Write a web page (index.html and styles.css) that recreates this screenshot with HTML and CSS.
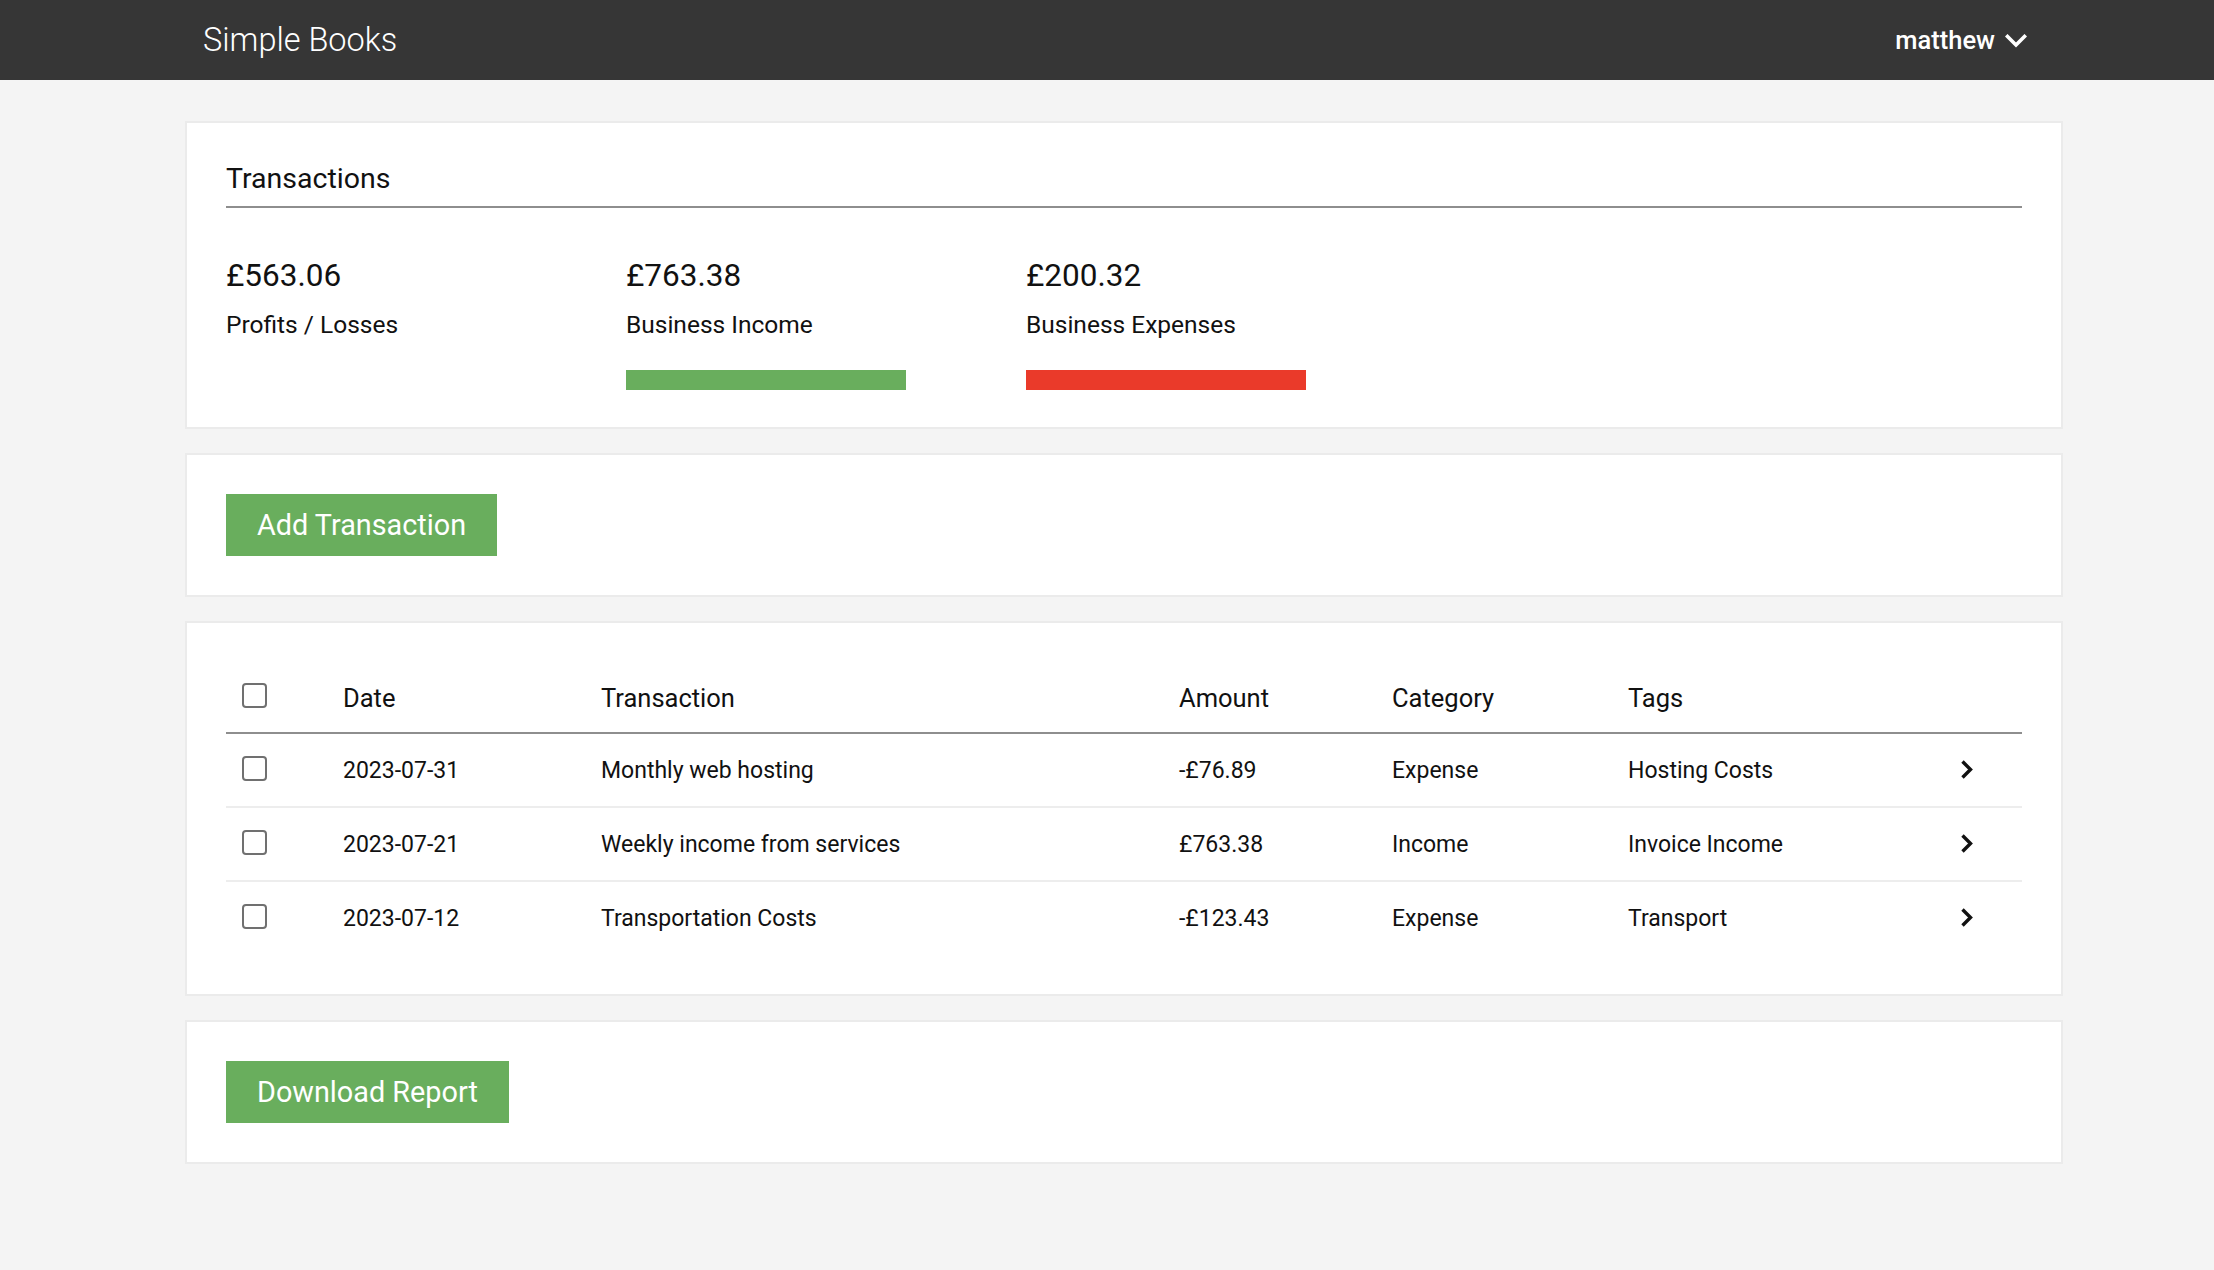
FILE: index.html
```html
<!DOCTYPE html>
<html lang="en">
<head>
<meta charset="utf-8">
<title>Simple Books</title>
<link rel="stylesheet" href="styles.css">
</head>
<body>
<header class="topbar">
  <div class="brand">Simple Books</div>
  <div class="user">
    <span>matthew</span>
    <svg class="user-chevron" width="22" height="14" viewBox="0 0 22 14" aria-hidden="true"><polyline points="2.5,2.5 11,11 19.5,2.5" fill="none" stroke="#fff" stroke-width="3.6" stroke-linecap="square"/></svg>
  </div>
</header>

<main class="page">
  <section class="card summary">
    <h1 class="card-title">Transactions</h1>
    <div class="stats">
      <div class="stat">
        <div class="stat-value">£563.06</div>
        <div class="stat-label">Profits / Losses</div>
      </div>
      <div class="stat">
        <div class="stat-value">£763.38</div>
        <div class="stat-label">Business Income</div>
        <div class="bar bar-income"></div>
      </div>
      <div class="stat">
        <div class="stat-value">£200.32</div>
        <div class="stat-label">Business Expenses</div>
        <div class="bar bar-expense"></div>
      </div>
    </div>
  </section>

  <section class="card action">
    <button class="btn" type="button">Add Transaction</button>
  </section>

  <section class="card list">
    <table class="tx-table">
      <colgroup>
        <col class="c-check"><col class="c-date"><col class="c-desc"><col class="c-amount"><col class="c-cat"><col class="c-tags"><col class="c-go">
      </colgroup>
      <thead>
        <tr>
          <th><input class="check" type="checkbox"></th>
          <th>Date</th>
          <th>Transaction</th>
          <th>Amount</th>
          <th>Category</th>
          <th>Tags</th>
          <th></th>
        </tr>
      </thead>
      <tbody>
        <tr>
          <td><input class="check" type="checkbox"></td>
          <td>2023-07-31</td>
          <td>Monthly web hosting</td>
          <td>-£76.89</td>
          <td>Expense</td>
          <td>Hosting Costs</td>
          <td class="go"><svg width="14" height="22" viewBox="0 0 14 22" aria-hidden="true"><polyline points="2.5,2.5 10.5,10.5 2.5,18.5" fill="none" stroke="#111" stroke-width="3.4"/></svg></td>
        </tr>
        <tr>
          <td><input class="check" type="checkbox"></td>
          <td>2023-07-21</td>
          <td>Weekly income from services</td>
          <td>£763.38</td>
          <td>Income</td>
          <td>Invoice Income</td>
          <td class="go"><svg width="14" height="22" viewBox="0 0 14 22" aria-hidden="true"><polyline points="2.5,2.5 10.5,10.5 2.5,18.5" fill="none" stroke="#111" stroke-width="3.4"/></svg></td>
        </tr>
        <tr>
          <td><input class="check" type="checkbox"></td>
          <td>2023-07-12</td>
          <td>Transportation Costs</td>
          <td>-£123.43</td>
          <td>Expense</td>
          <td>Transport</td>
          <td class="go"><svg width="14" height="22" viewBox="0 0 14 22" aria-hidden="true"><polyline points="2.5,2.5 10.5,10.5 2.5,18.5" fill="none" stroke="#111" stroke-width="3.4"/></svg></td>
        </tr>
      </tbody>
    </table>
  </section>

  <section class="card action">
    <button class="btn" type="button">Download Report</button>
  </section>
</main>
</body>
</html>
```

FILE: styles.css
```css
* { box-sizing: border-box; }

html, body {
  margin: 0;
  padding: 0;
}

body {
  background: #f4f4f4;
  color: #111;
  font-family: Roboto, "Liberation Sans", Arial, sans-serif;
  min-height: 1270px;
}

.topbar {
  height: 80px;
  background: #363636;
  color: #fff;
  display: flex;
  align-items: center;
  justify-content: space-between;
  padding: 0 187px 0 203px;
}

.brand {
  font-size: 32.5px;
  font-weight: 300;
}

.user {
  display: flex;
  align-items: center;
  gap: 10px;
  font-size: 25.5px;
  font-weight: 500;
}

.user-chevron {
  display: block;
  margin-top: 2px;
}

.page {
  display: flex;
  flex-direction: column;
  gap: 24px;
  padding: 41px 151px 40px 185px;
}

.card {
  background: #fff;
  border: 2px solid #ebebeb;
  padding: 39px;
}

.summary {
  padding-bottom: 37px;
}

.card-title {
  margin: 0;
  font-size: 28.5px;
  font-weight: 400;
  line-height: 34px;
  padding-bottom: 10px;
  border-bottom: 2px solid #8e8e8e;
}

.stats {
  display: grid;
  grid-template-columns: 400px 400px 400px;
  margin-top: 49px;
}

.stat-value {
  font-size: 31.5px;
  line-height: 38px;
}

.stat-label {
  font-size: 24.5px;
  line-height: 30px;
  margin-top: 15px;
}

.bar {
  width: 280px;
  height: 20px;
  margin-top: 30px;
}

.bar-income { background: #69ae5d; }
.bar-expense { background: #ea3a2a; }

.btn {
  display: block;
  height: 62px;
  padding: 0 31px;
  border: 0;
  border-radius: 0;
  background: #69ae5d;
  color: #fff;
  font-family: Roboto, "Liberation Sans", Arial, sans-serif;
  font-size: 28.8px;
  font-weight: 400;
  cursor: pointer;
}

.tx-table {
  width: 100%;
  border-collapse: collapse;
  table-layout: fixed;
}

.c-check { width: 117px; }
.c-date { width: 258px; }
.c-desc { width: 578px; }
.c-amount { width: 213px; }
.c-cat { width: 236px; }
.c-go { width: 100px; }

.tx-table th,
.tx-table td {
  padding: 0;
  text-align: left;
  vertical-align: middle;
  white-space: nowrap;
}

.tx-table th {
  height: 71px;
  font-size: 25.5px;
  font-weight: 400;
  border-bottom: 2px solid #8e8e8e;
  padding-top: 1px;
}

.tx-table td {
  height: 74px;
  font-size: 23px;
}

.tx-table tbody tr + tr td {
  border-top: 2px solid #ededed;
}

.tx-table th:first-child,
.tx-table td:first-child {
  padding-left: 16px;
}

.check {
  -webkit-appearance: none;
  appearance: none;
  display: block;
  width: 25px;
  height: 25px;
  margin: 0;
  border: 2.5px solid #707070;
  border-radius: 4px;
  background: #fff;
}

.tx-table th .check {
  margin-top: -5px;
}

.tx-table td .check {
  margin-top: -4px;
}

.go {
  padding-left: 38px !important;
}

.go svg {
  display: block;
  margin-top: -1px;
}
```
